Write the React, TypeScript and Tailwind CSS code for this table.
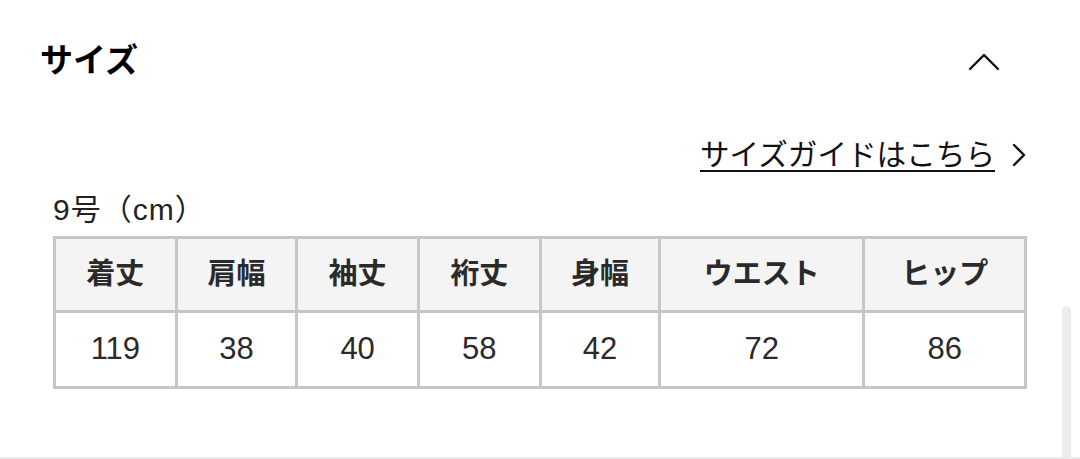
import React from "react";

const heads = ["着丈", "肩幅", "袖丈", "裄丈", "身幅", "ウエスト", "ヒップ"];
const vals = ["119", "38", "40", "58", "42", "72", "86"];
const widths = ["w-[122px]", "w-[121px]", "w-[122px]", "w-[122px]", "w-[120px]", "w-[205px]", "w-[162px]"];

export default function App() {
  return (
    <div
      className="relative w-[1080px] h-[459px] overflow-hidden bg-white text-[#222]"
      style={{ fontFamily: '"Liberation Sans", "Noto Sans CJK JP", sans-serif' }}
    >
      <div className="flex items-center justify-between pl-[40px] pr-[80px] pt-[38px]">
        <h2 className="text-[33px] font-bold leading-[46px] text-black">サイズ</h2>
        <svg width="32" height="18" viewBox="0 0 32 18" className="mt-[2px]">
          <path d="M2 16 L16 2 L30 16" fill="none" stroke="#111" strokeWidth="2.4" strokeLinecap="round" strokeLinejoin="round" />
        </svg>
      </div>

      <div className="flex items-center justify-end pr-[53px] mt-[51px] h-[40px]">
        <a className="text-[29.6px] leading-[40px] text-[#111] underline decoration-[2px] underline-offset-[5px]">
          サイズガイドはこちら
        </a>
        <svg width="16" height="24" viewBox="0 0 16 24" className="ml-[16px]">
          <path d="M3 2 L13 12 L3 22" fill="none" stroke="#111" strokeWidth="2.4" strokeLinecap="round" strokeLinejoin="round" />
        </svg>
      </div>

      <div className="pl-[53px] mt-[17px] text-[30px] tracking-[1px] leading-[36px] text-[#222]">9号（cm）</div>

      <table className="ml-[53px] mt-[8px] border-collapse w-[974px]">
        <thead>
          <tr>
            {heads.map((h, i) => (
              <th
                key={h}
                className={`${widths[i]} h-[74px] border-[3px] border-[#c6c6c6] bg-[#f4f4f5] text-[29px] font-bold text-[#2a2a2a] text-center`}
              >
                {h}
              </th>
            ))}
          </tr>
        </thead>
        <tbody>
          <tr>
            {vals.map((v, i) => (
              <td
                key={i}
                className={`${widths[i]} h-[76px] border-[3px] border-[#c6c6c6] bg-white text-[31px] text-[#2a2a2a] text-center`}
              >
                {v}
              </td>
            ))}
          </tr>
        </tbody>
      </table>

      <div className="absolute right-[9px] top-[306px] bottom-0 w-[9px] rounded-t-full bg-[#ececec]" />
      <div className="absolute left-0 right-0 bottom-0 h-[2px] bg-[#ececec]" />
    </div>
  );
}
